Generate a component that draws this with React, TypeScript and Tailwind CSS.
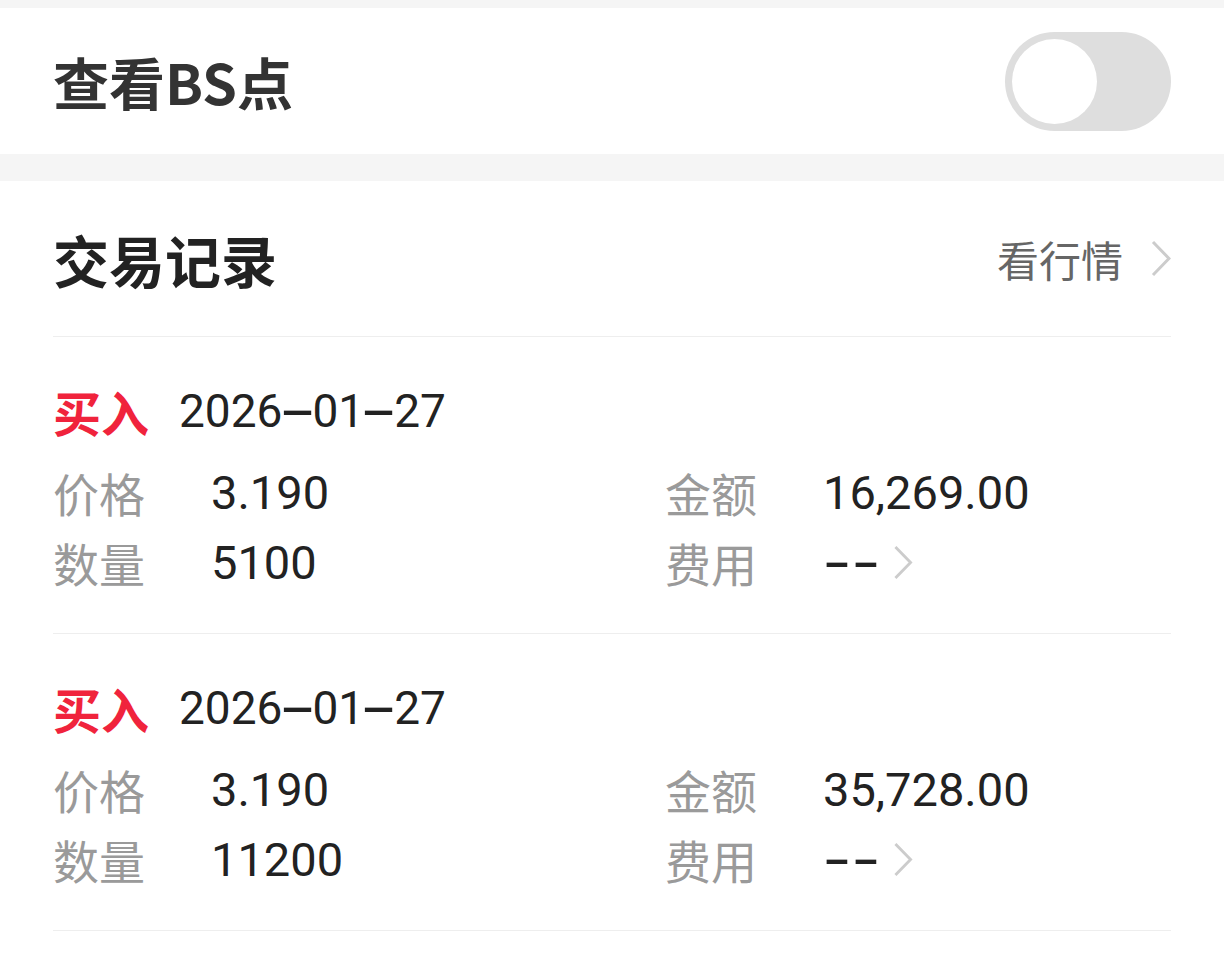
import React from "react";

const roboto = "font-['Roboto','Noto_Sans_CJK_SC',sans-serif]";
const cjk = "font-['Noto_Sans_CJK_SC',sans-serif]";

function Chevron({ className = "" }: { className?: string }) {
  return (
    <svg viewBox="0 0 20 37" className={className} fill="none">
      <polyline points="2,2 18,18.5 2,35" stroke="#cccccc" strokeWidth="3" strokeLinejoin="miter" />
    </svg>
  );
}

// the app's number font draws wide dashes; stretch the hyphen to match
function DateDash() {
  return (
    <span className="inline-flex w-[30px] justify-center">
      <span className="inline-block scale-x-[2.3] font-medium">-</span>
    </span>
  );
}

function FeeDash() {
  return (
    <span className="inline-flex w-[27px] justify-center">
      <span className="inline-block scale-x-[1.7] font-medium">-</span>
    </span>
  );
}

function DateText({ text }: { text: string }) {
  const parts = text.split("-");
  return (
    <span className="inline-flex items-center">
      {parts.map((p, i) => (
        <React.Fragment key={i}>
          {i > 0 && <DateDash />}
          <span>{p}</span>
        </React.Fragment>
      ))}
    </span>
  );
}

type Trade = { side: string; date: string; price: string; amount: string; qty: string };

const trades: Trade[] = [
  { side: "买入", date: "2026-01-27", price: "3.190", amount: "16,269.00", qty: "5100" },
  { side: "买入", date: "2026-01-27", price: "3.190", amount: "35,728.00", qty: "11200" },
];

function Field({ label, children }: { label: string; children: React.ReactNode }) {
  return (
    <div className="flex h-[70px] items-center">
      <span className={`w-[158px] shrink-0 text-[46px] leading-none text-[#9a9a9a] ${cjk}`}>{label}</span>
      <span className="flex items-center text-[47px] leading-none text-[#222222]">{children}</span>
    </div>
  );
}

function TradeRow({ t }: { t: Trade }) {
  return (
    <div className="border-b border-[#eeeeee] pt-[44px] pb-[36px]">
      <div className="flex h-[60px] items-center">
        <span className={`text-[48px] font-bold leading-none text-[#f0233c] ${cjk}`}>{t.side}</span>
        <span className="ml-[30px] text-[46px] leading-none text-[#222222]">
          <DateText text={t.date} />
        </span>
      </div>
      <div className="mt-4 grid grid-cols-[612px_1fr]">
        <div>
          <Field label="价格">{t.price}</Field>
          <Field label="数量">{t.qty}</Field>
        </div>
        <div>
          <Field label="金额">{t.amount}</Field>
          <Field label="费用">
            <span className="inline-flex gap-[2px]">
              <FeeDash />
              <FeeDash />
            </span>
            <Chevron className="ml-[14px] h-[35px] w-[20px]" />
          </Field>
        </div>
      </div>
    </div>
  );
}

export default function App() {
  return (
    <div className={`min-h-screen bg-white ${roboto}`}>
      <div className="h-2 bg-[#f5f5f5]" />
      <div className="flex h-[146px] items-center justify-between pl-[53px] pr-[53px]">
        <span className={`text-[56px] font-bold leading-none text-[#333333] ${cjk}`}>查看BS点</span>
        <button type="button" className="flex h-[99px] w-[166px] items-center rounded-full bg-[#dedede] p-[7px]">
          <span className="block h-[85px] w-[85px] rounded-full bg-white" />
        </button>
      </div>
      <div className="h-[27px] bg-[#f5f5f5]" />
      <div className="px-[53px]">
        <div className="flex h-[156px] items-center justify-between border-b border-[#eeeeee]">
          <span className={`text-[56px] font-bold leading-none text-[#222222] ${cjk}`}>交易记录</span>
          <div className="flex items-center">
            <span className={`text-[42px] leading-none text-[#666666] ${cjk}`}>看行情</span>
            <Chevron className="ml-[28px] h-[37px] w-[20px]" />
          </div>
        </div>
        {trades.map((t, i) => (
          <TradeRow key={i} t={t} />
        ))}
      </div>
    </div>
  );
}
